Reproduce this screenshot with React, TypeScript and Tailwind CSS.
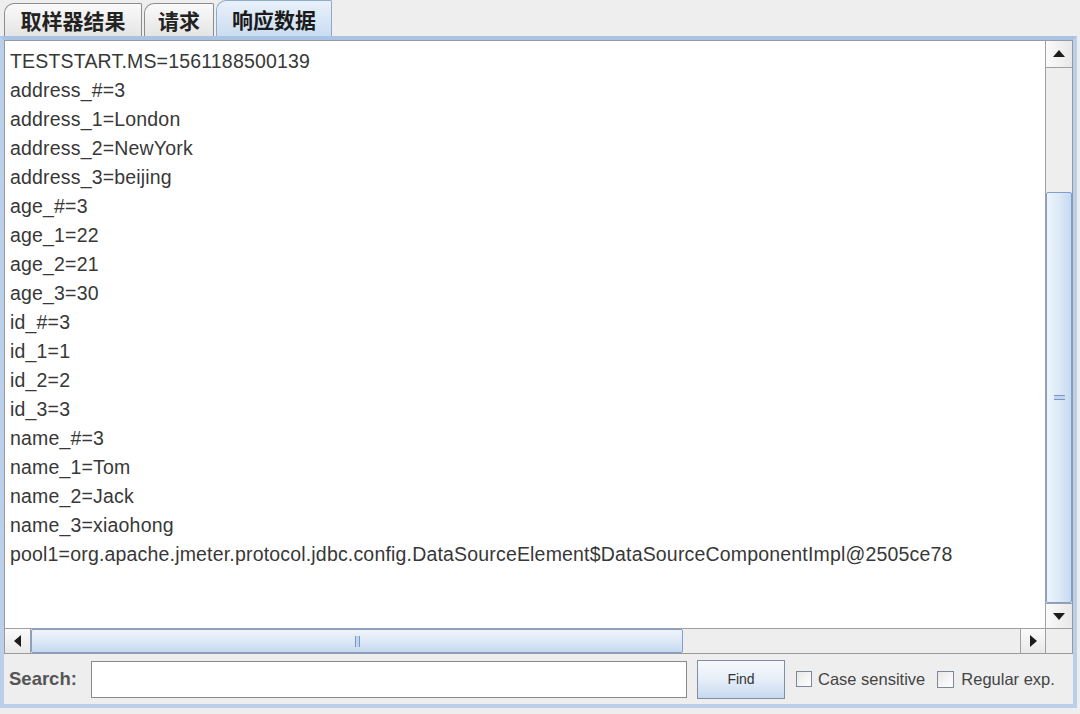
import React from "react";

const LINES = [
  "TESTSTART.MS=1561188500139",
  "address_#=3",
  "address_1=London",
  "address_2=NewYork",
  "address_3=beijing",
  "age_#=3",
  "age_1=22",
  "age_2=21",
  "age_3=30",
  "id_#=3",
  "id_1=1",
  "id_2=2",
  "id_3=3",
  "name_#=3",
  "name_1=Tom",
  "name_2=Jack",
  "name_3=xiaohong",
  "pool1=org.apache.jmeter.protocol.jdbc.config.DataSourceElement$DataSourceComponentImpl@2505ce78",
];

const CJK = "font-['Noto_Sans_CJK_SC','Noto_Sans',sans-serif]";

function Tab({ label, active, w }: { label: string; active?: boolean; w: string }) {
  return (
    <div
      className={`${w} flex items-center justify-center rounded-tl-[10px] rounded-tr-[2px] border border-b-0 text-[21px] font-bold leading-none ${CJK} ${
        active
          ? "bg-gradient-to-b from-[#e9f1fa] to-[#c9dcf1] border-[#8fa9cb] text-[#1a1a1a] h-[37px]"
          : "bg-gradient-to-b from-[#fafafa] to-[#e4e4e4] border-[#8c8c8c] text-[#222] h-[34px]"
      }`}
    >
      {label}
    </div>
  );
}

function Arrow({ dir }: { dir: "up" | "down" | "left" | "right" }) {
  const pts = {
    up: "0,9 6,2 12,9",
    down: "0,3 6,10 12,3",
    left: "9,0 2,6 9,12",
    right: "3,0 10,6 3,12",
  }[dir];
  return (
    <svg width="12" height="12" viewBox="0 0 12 12">
      <polygon points={pts} fill="#1d1d1d" />
    </svg>
  );
}

export default function App() {
  return (
    <div className="w-[1080px] h-[714px] bg-[#eeeeee] overflow-hidden flex flex-col font-['Liberation_Sans',Arial,sans-serif]">
      <div className="h-[37px] flex items-end pl-[4px] gap-[2px] shrink-0">
        <Tab label="取样器结果" w="w-[138px]" />
        <Tab label="请求" w="w-[70px]" />
        <Tab label="响应数据" w="w-[116px]" active />
      </div>
      <div className="flex-1 mr-[3px] mb-[6px] border-[4px] border-[#b9cfea] border-t-[#a9c3e4] flex flex-col bg-[#eeeeee] -mt-px">
        <div className="flex-1 flex border border-[#9a9a9a] min-h-0">
          <div className="flex-1 flex flex-col min-w-0">
            <div className="flex-1 bg-white pt-[6px] pl-[5px] overflow-hidden">
              {LINES.map((l) => (
                <div key={l} className="h-[29px] leading-[29px] text-[19.5px] tracking-[0.18px] text-[#383838] whitespace-nowrap">
                  {l}
                </div>
              ))}
            </div>
            <div className="h-[25px] flex border-t border-[#a0a0a0] bg-[#eeeeee]">
              <div className="w-[26px] flex items-center justify-center border-r border-[#a0a0a0] bg-gradient-to-b from-[#fbfbfb] to-[#e8e8e8]">
                <Arrow dir="left" />
              </div>
              <div className="w-[652px] relative rounded-[2px] border border-[#7f9fce] bg-gradient-to-b from-[#eef4fb] via-[#dde9f6] to-[#c6daf0] flex items-center justify-center">
                <div className="w-[5px] h-[11px] border-x border-[#7c97c2] bg-[#c3d5ec]" />
              </div>
              <div className="flex-1" />
              <div className="w-[25px] flex items-center justify-center border-l border-[#a0a0a0] bg-gradient-to-b from-[#fbfbfb] to-[#e8e8e8]">
                <Arrow dir="right" />
              </div>
            </div>
          </div>
          <div className="w-[27px] flex flex-col border-l border-[#a0a0a0] bg-[#eeeeee]">
            <div className="h-[27px] flex items-center justify-center border-b border-[#a0a0a0] bg-gradient-to-r from-[#fbfbfb] to-[#e8e8e8]">
              <Arrow dir="up" />
            </div>
            <div className="h-[124px]" />
            <div className="flex-1 rounded-[2px] border border-[#7f9fce] bg-gradient-to-r from-[#eef4fb] via-[#dde9f6] to-[#c6daf0] flex items-center justify-center">
              <div className="w-[11px] h-[5px] border-y border-[#7c97c2] bg-[#c3d5ec]" />
            </div>
            <div className="h-[25px] flex items-center justify-center border-t border-[#a0a0a0] bg-gradient-to-r from-[#fbfbfb] to-[#e8e8e8]">
              <Arrow dir="down" />
            </div>
            <div className="h-[25px] border-t border-[#a0a0a0] bg-[#eeeeee]" />
          </div>
        </div>
        <div className="h-[50px] flex items-center shrink-0 pl-[5px]">
          <span className="text-[18.5px] font-bold text-[#555] w-[82px]">Search:</span>
          <div className="w-[596px] h-[37px] bg-white border border-[#8a8a8a]" />
          <button className="ml-[10px] w-[88px] h-[39px] border border-[#7d8ea6] bg-gradient-to-b from-[#f7f9fc] via-[#e6eef8] to-[#c7d9ef] text-[14px] text-[#333]">
            Find
          </button>
          <div className="ml-[11px] w-[16px] h-[16px] border border-[#7d8796] bg-gradient-to-br from-[#e8e8e8] to-white" />
          <span className="ml-[6px] text-[16.5px] text-[#444]">Case sensitive</span>
          <div className="ml-[12px] w-[17px] h-[17px] border border-[#7d8796] bg-gradient-to-br from-[#e8e8e8] to-white" />
          <span className="ml-[7px] text-[16.5px] text-[#444]">Regular exp.</span>
        </div>
      </div>
    </div>
  );
}
